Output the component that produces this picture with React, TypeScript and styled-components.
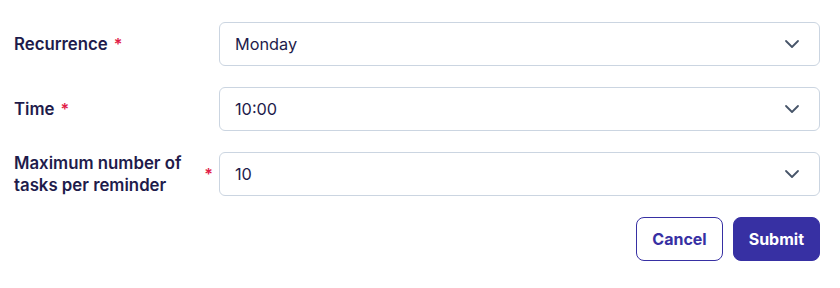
import React from "react";
import styled, { createGlobalStyle } from "styled-components";

const Global = createGlobalStyle`
  html, body { margin: 0; padding: 0; background: #ffffff; }
  body { font-family: Inter, "Noto Sans", Arial, sans-serif; -webkit-font-smoothing: antialiased; }
  * { box-sizing: border-box; }
`;

const Form = styled.form`
  padding: 22px 20px 0 14px;
  display: flex;
  flex-direction: column;
  gap: 21px;
`;

const Row = styled.div`
  display: grid;
  grid-template-columns: 199px 1fr;
  column-gap: 6px;
  align-items: center;
`;

const Label = styled.label`
  display: flex;
  align-items: center;
  font-size: 16.8px;
  font-weight: 600;
  line-height: 22px;
  color: #1e1b4b;
`;

const Required = styled.span`
  color: #e11d48;
  font-size: 16px;
  margin-left: 6px;
  flex: none;
`;

const Select = styled.div`
  height: 44px;
  border: 1px solid #cbd5e1;
  border-radius: 6px;
  display: flex;
  align-items: center;
  justify-content: space-between;
  padding: 0 15px 0 15px;
  font-size: 16.3px;
  color: #1e1b4b;
  background: #fff;
`;

const Actions = styled.div`
  display: flex;
  justify-content: flex-end;
  gap: 10px;
`;

const Button = styled.button<{ $primary?: boolean }>`
  height: 44px;
  padding: 0 15px;
  border-radius: 8px;
  font-family: inherit;
  font-size: 16px;
  font-weight: 700;
  border: 1px solid #3730a3;
  background: ${(p) => (p.$primary ? "#3730a3" : "#ffffff")};
  color: ${(p) => (p.$primary ? "#ffffff" : "#3730a3")};
  cursor: pointer;
`;

const Chevron = () => (
  <svg width="24" height="24" viewBox="0 0 24 24" fill="none" stroke="#475569" strokeWidth="1.8" strokeLinecap="round" strokeLinejoin="round">
    <path d="m6 9 6 6 6-6" />
  </svg>
);

const fields = [
  { label: "Recurrence", value: "Monday" },
  { label: "Time", value: "10:00" },
  { label: "Maximum number of tasks per reminder", value: "10" },
];

export default function App() {
  return (
    <>
      <Global />
      <Form onSubmit={(e) => e.preventDefault()}>
        {fields.map((f) => (
          <Row key={f.label}>
            <Label>
              <span>{f.label}</span>
              <Required>*</Required>
            </Label>
            <Select>
              <span>{f.value}</span>
              <Chevron />
            </Select>
          </Row>
        ))}
        <Actions>
          <Button type="button">Cancel</Button>
          <Button type="submit" $primary>Submit</Button>
        </Actions>
      </Form>
    </>
  );
}
